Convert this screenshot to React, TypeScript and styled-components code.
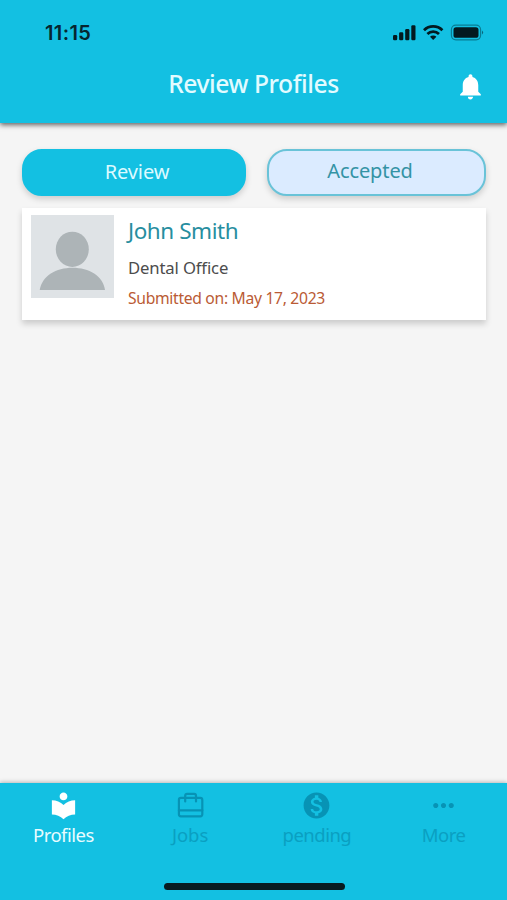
import React from "react";
import styled, { createGlobalStyle } from "styled-components";
import {
  MdLocalLibrary,
  MdMonetizationOn,
  MdMoreHoriz,
  MdNotifications,
} from "react-icons/md";

const GlobalStyle = createGlobalStyle`
  *, *::before, *::after { box-sizing: border-box; }
  body { margin: 0; background: #f5f5f5; font-family: "Noto Sans", "Open Sans", sans-serif; }
  button { font: inherit; border: 0; padding: 0; background: none; }
`;

const Screen = styled.div`
  display: flex;
  flex-direction: column;
  width: 507px;
  height: 900px;
  overflow: hidden;
  background: #f5f5f5;
`;

const Header = styled.header`
  height: 123px;
  flex: none;
  background: #13c0e2;
  box-shadow: 0 2px 5px rgba(0, 0, 0, 0.6);
`;

const StatusBar = styled.div`
  display: flex;
  align-items: center;
  justify-content: space-between;
  height: 66px;
  padding: 0 23px 0 45px;
`;

const Clock = styled.span`
  font: 600 20px/24px Inter, sans-serif;
  letter-spacing: 0.4px;
  color: #062630;
`;

const TitleBar = styled.div`
  display: grid;
  grid-template-columns: 60px 1fr 60px;
  align-items: center;
  height: 40px;
`;

const Title = styled.h1`
  grid-column: 2;
  margin: -4px 0 0;
  text-align: center;
  font-size: 24.7px;
  line-height: 36px;
  font-weight: 500;
  letter-spacing: -0.45px;
  color: #e2fbff;
`;

const BellButton = styled.button`
  display: flex;
  width: 31px;
  height: 31px;
  margin-left: 8px;
  color: #fff;
`;

const Content = styled.main`
  flex: 1;
  padding: 26px 21px 0 22px;
`;

const Tabs = styled.div`
  display: grid;
  grid-template-columns: 224px 219px;
  justify-content: space-between;
`;

const Tab = styled.button<{ $active?: boolean }>`
  height: 47px;
  border-radius: 20px;
  border: 2px solid ${(p) => (p.$active ? "#13c0e2" : "#69c3d8")};
  background: ${(p) => (p.$active ? "#13c0e2" : "#dbebff")};
  color: ${(p) => (p.$active ? "#dcfaff" : "#3493a5")};
  padding: ${(p) => (p.$active ? "0 0 2px 6px" : "0 13px 4px 0")};
  font-size: 20px;
  line-height: 26px;
  letter-spacing: -0.1px;
  box-shadow: 0 3px 6px rgba(0, 0, 0, 0.17);
`;

const Card = styled.article`
  display: flex;
  gap: 14px;
  height: 112px;
  margin-top: 12px;
  padding: 7px 9px 8px;
  background: #fff;
  box-shadow: 0 4px 6px rgba(0, 0, 0, 0.17);
`;

const Avatar = styled.svg`
  display: block;
  width: 83px;
  height: 83px;
  flex: none;
  background: #dfe3e6;
`;

const Details = styled.div`
  display: flex;
  flex-direction: column;
`;

const Name = styled.h2`
  margin: 0;
  font-size: 22.5px;
  line-height: 32px;
  font-weight: 400;
  letter-spacing: -0.45px;
  color: #278e9f;
`;

const Office = styled.p`
  margin: 6px 0 0;
  font-size: 16.7px;
  line-height: 30px;
  letter-spacing: -0.15px;
  color: #4c4c4c;
`;

const Submitted = styled.p`
  margin: 0;
  font-size: 15.7px;
  line-height: 30px;
  letter-spacing: -0.32px;
  color: #ba5b35;
`;

const BottomNav = styled.nav`
  display: flex;
  flex: none;
  flex-direction: column;
  justify-content: space-between;
  height: 117px;
  padding: 7px 0 10px;
  background: #13c0e2;
  box-shadow: 0 -1px 4px rgba(0, 0, 0, 0.25);
`;

const NavItems = styled.div`
  display: grid;
  grid-template-columns: repeat(4, 1fr);
`;

const NavItem = styled.button<{ $active?: boolean }>`
  display: flex;
  flex-direction: column;
  align-items: center;
  color: ${(p) => (p.$active ? "#fff" : "#0793b5")};
`;

const NavLabel = styled.span<{ $active?: boolean; $spacing: number }>`
  font-size: 18.5px;
  line-height: 28px;
  letter-spacing: ${(p) => p.$spacing}px;
  color: ${(p) => (p.$active ? "#e8fcff" : "#0a9fc1")};
`;

const HomeIndicator = styled.div`
  width: 181px;
  height: 7px;
  margin-left: 164px;
  border-radius: 4px;
  background: #081b20;
`;

function StatusIcons() {
  return (
    <svg width="92" height="20" viewBox="392 23 92 20" aria-hidden="true">
      <g fill="#031a20">
        <rect x="393" y="35" width="4.2" height="5.3" rx="1.2" />
        <rect x="399.1" y="32.3" width="4.2" height="8" rx="1.2" />
        <rect x="405.2" y="29" width="4.2" height="11.3" rx="1.2" />
        <rect x="411.3" y="25.2" width="4.2" height="15.1" rx="1.2" />
        <rect x="453.5" y="27.2" width="25" height="10.6" rx="2.6" />
        <path d="M482 30.5q2.2 2 0 4z" opacity=".55" />
        <path d="M433.2 35.4q-2 0-3.2 1.3l3.2 3.3 3.2-3.3q-1.2-1.3-3.2-1.3z" />
      </g>
      <g fill="none" stroke="#031a20" strokeWidth="2.8">
        <path d="M424 30.2a13.2 13.2 0 0 1 18.4 0" />
        <path d="M427.4 34a8.4 8.4 0 0 1 11.6 0" />
      </g>
      <rect x="451.4" y="25.2" width="29.2" height="14.6" rx="4.5" fill="none" stroke="#087d94" strokeWidth="1.2" />
    </svg>
  );
}

function TravelCase({ size }: { size: number }) {
  return (
    <svg width={size} height={size} viewBox="0 0 31 31" fill="none" stroke="currentColor" strokeWidth="2.2" strokeLinejoin="round" strokeLinecap="round">
      <rect x="3.9" y="7.9" width="23.4" height="18.4" rx="2" />
      <path d="M3.9 20.3h23.4M10.2 11.5V5.8q0-1.9 1.9-1.9h7q1.9 0 1.9 1.9v5.7" />
    </svg>
  );
}

const navItems = [
  { label: "Profiles", Icon: MdLocalLibrary, spacing: -0.5, active: true },
  { label: "Jobs", Icon: TravelCase, spacing: -0.1 },
  { label: "pending", Icon: MdMonetizationOn, spacing: -0.5 },
  { label: "More", Icon: MdMoreHoriz, spacing: -0.5 },
];

export default function App() {
  return (
    <Screen>
      <GlobalStyle />
      <Header>
        <StatusBar>
          <Clock>11:15</Clock>
          <StatusIcons />
        </StatusBar>
        <TitleBar>
          <Title>Review Profiles</Title>
          <BellButton aria-label="Notifications">
            <MdNotifications size={31} />
          </BellButton>
        </TitleBar>
      </Header>
      <Content>
        <Tabs>
          <Tab $active>Review</Tab>
          <Tab>Accepted</Tab>
        </Tabs>
        <Card>
          <Avatar viewBox="0 0 83 83" aria-hidden="true">
            <ellipse cx="41.3" cy="34.3" rx="16.5" ry="17.6" fill="#adb4b7" />
            <path d="M8.7 75C11 61 25 52.8 41.5 52.8S72 61 74 75z" fill="#adb4b7" />
          </Avatar>
          <Details>
            <Name>John Smith</Name>
            <Office>Dental Office</Office>
            <Submitted>Submitted on: May 17, 2023</Submitted>
          </Details>
        </Card>
      </Content>
      <BottomNav>
        <NavItems>
          {navItems.map(({ label, Icon, spacing, active }) => (
            <NavItem key={label} $active={active}>
              <Icon size={31} />
              <NavLabel $active={active} $spacing={spacing}>
                {label}
              </NavLabel>
            </NavItem>
          ))}
        </NavItems>
        <HomeIndicator />
      </BottomNav>
    </Screen>
  );
}
